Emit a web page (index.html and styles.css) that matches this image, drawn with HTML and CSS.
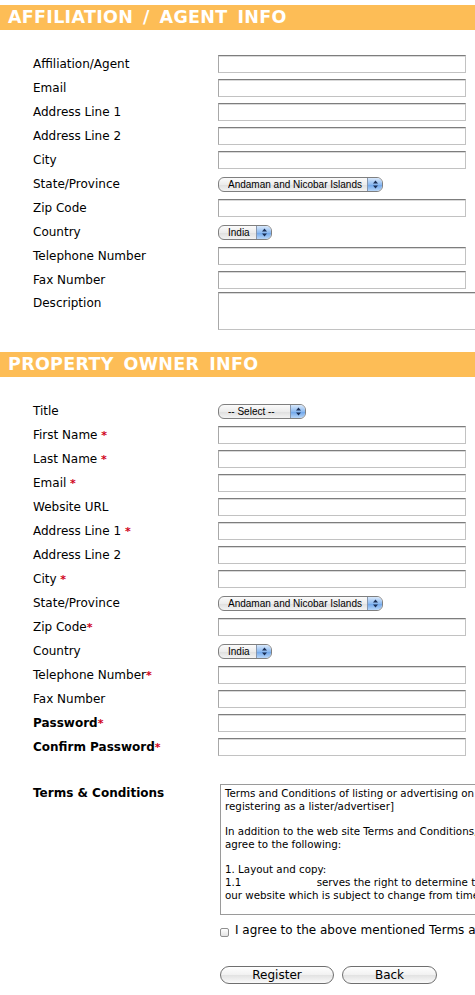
FILE: index.html
```html
<!DOCTYPE html>
<html>
<head>
<meta charset="utf-8">
<link rel="stylesheet" href="styles.css">
</head>
<body>
<div class="page">
  <h2 class="band">AFFILIATION / AGENT INFO</h2>
  <div class="form-grid section-one">
    <label class="lbl">Affiliation/Agent</label><div class="fld"><input class="txt" type="text"></div>
    <label class="lbl">Email</label><div class="fld"><input class="txt" type="text"></div>
    <label class="lbl">Address Line 1</label><div class="fld"><input class="txt" type="text"></div>
    <label class="lbl">Address Line 2</label><div class="fld"><input class="txt" type="text"></div>
    <label class="lbl">City</label><div class="fld"><input class="txt" type="text"></div>
    <label class="lbl">State/Province</label><div class="fld"><span class="select"><select class="select-native w-state"><option>Andaman and Nicobar Islands</option></select><span class="select-arrow"><svg width="7" height="9" viewBox="0 0 7 9"><path d="M3.5 0.5 L6 3.5 L1 3.5 Z M3.5 8.5 L6 5.5 L1 5.5 Z" fill="#1a2f55"/></svg></span></span></div>
    <label class="lbl">Zip Code</label><div class="fld"><input class="txt" type="text"></div>
    <label class="lbl">Country</label><div class="fld"><span class="select"><select class="select-native w-country"><option>India</option></select><span class="select-arrow"><svg width="7" height="9" viewBox="0 0 7 9"><path d="M3.5 0.5 L6 3.5 L1 3.5 Z M3.5 8.5 L6 5.5 L1 5.5 Z" fill="#1a2f55"/></svg></span></span></div>
    <label class="lbl">Telephone Number</label><div class="fld"><input class="txt" type="text"></div>
    <label class="lbl">Fax Number</label><div class="fld"><input class="txt" type="text"></div>
    <label class="lbl lbl-top">Description</label><div class="fld fld-top"><textarea class="desc"></textarea></div>
  </div>

  <h2 class="band">PROPERTY OWNER INFO</h2>
  <div class="form-grid section-two">
    <label class="lbl">Title</label><div class="fld"><span class="select"><select class="select-native w-title"><option>-- Select --</option></select><span class="select-arrow"><svg width="7" height="9" viewBox="0 0 7 9"><path d="M3.5 0.5 L6 3.5 L1 3.5 Z M3.5 8.5 L6 5.5 L1 5.5 Z" fill="#1a2f55"/></svg></span></span></div>
    <label class="lbl">First Name <span class="req">*</span></label><div class="fld"><input class="txt" type="text"></div>
    <label class="lbl">Last Name <span class="req">*</span></label><div class="fld"><input class="txt" type="text"></div>
    <label class="lbl">Email <span class="req">*</span></label><div class="fld"><input class="txt" type="text"></div>
    <label class="lbl">Website URL</label><div class="fld"><input class="txt" type="text"></div>
    <label class="lbl">Address Line 1 <span class="req">*</span></label><div class="fld"><input class="txt" type="text"></div>
    <label class="lbl">Address Line 2</label><div class="fld"><input class="txt" type="text"></div>
    <label class="lbl">City <span class="req">*</span></label><div class="fld"><input class="txt" type="text"></div>
    <label class="lbl">State/Province</label><div class="fld"><span class="select"><select class="select-native w-state"><option>Andaman and Nicobar Islands</option></select><span class="select-arrow"><svg width="7" height="9" viewBox="0 0 7 9"><path d="M3.5 0.5 L6 3.5 L1 3.5 Z M3.5 8.5 L6 5.5 L1 5.5 Z" fill="#1a2f55"/></svg></span></span></div>
    <label class="lbl">Zip Code<span class="req">*</span></label><div class="fld"><input class="txt" type="text"></div>
    <label class="lbl">Country</label><div class="fld"><span class="select"><select class="select-native w-country"><option>India</option></select><span class="select-arrow"><svg width="7" height="9" viewBox="0 0 7 9"><path d="M3.5 0.5 L6 3.5 L1 3.5 Z M3.5 8.5 L6 5.5 L1 5.5 Z" fill="#1a2f55"/></svg></span></span></div>
    <label class="lbl">Telephone Number<span class="req">*</span></label><div class="fld"><input class="txt" type="text"></div>
    <label class="lbl">Fax Number</label><div class="fld"><input class="txt" type="text"></div>
    <label class="lbl lbl-bold">Password<span class="req">*</span></label><div class="fld"><input class="txt" type="password"></div>
    <label class="lbl lbl-bold">Confirm Password<span class="req">*</span></label><div class="fld"><input class="txt" type="password"></div>
  </div>

  <div class="terms">
    <div class="terms-label">Terms &amp; Conditions</div>
    <div class="terms-body">
      <textarea class="terms-text" readonly>Terms and Conditions of listing or advertising on this website [applicable upon
registering as a lister/advertiser]

In addition to the web site Terms and Conditions, all listers/advertisers
agree to the following:

1. Layout and copy:
1.1                       serves the right to determine the layout of listings on
our website which is subject to change from time to time.</textarea>
      <div class="agree"><input class="chk" type="checkbox"><span class="agree-text">I agree to the above mentioned Terms and Conditions</span></div>
      <div class="actions">
        <button class="btn btn-register" type="button">Register</button>
        <button class="btn btn-back" type="button">Back</button>
      </div>
    </div>
  </div>
</div>
</body>
</html>
```

FILE: styles.css
```css
html, body {
  margin: 0;
  padding: 0;
  overflow: hidden;
  background: #ffffff;
}

.page {
  width: 475px;
  overflow: hidden;
  padding-top: 5px;
  font-family: "DejaVu Sans", Verdana, sans-serif;
  color: #000;
}

.band {
  margin: 0;
  height: 25px;
  line-height: 25px;
  background: #fdbd56;
  color: #ffffff;
  font-family: "DejaVu Sans", Verdana, sans-serif;
  font-weight: bold;
  font-size: 17.5px;
  letter-spacing: 0.3px;
  word-spacing: 3.5px;
  padding-left: 8px;
  white-space: nowrap;
}

.form-grid {
  display: grid;
  grid-template-columns: 185px 320px;
  grid-auto-rows: 24px;
  padding-left: 33px;
}

.section-one {
  grid-template-rows: repeat(10, 24px) 38px;
  padding-top: 22px;
  padding-bottom: 22px;
}

.section-two {
  padding-top: 22px;
}

.lbl {
  display: block;
  font-size: 12px;
  line-height: 24px;
  white-space: nowrap;
}

.lbl-bold {
  font-weight: bold;
}

.lbl-top {
  line-height: 22px;
}

.req {
  color: #d0021b;
  font-weight: bold;
  font-size: 11px;
}

.fld {
  display: flex;
  align-items: center;
}

.fld-top {
  align-items: flex-start;
}

.txt {
  box-sizing: border-box;
  width: 248px;
  height: 18px;
  margin: 0;
  border: 1px solid #c2c2c2;
  border-top-color: #7d7d7d;
  border-left-color: #a8a8a8;
  box-shadow: inset 0 1px 0 #d9d9d9;
  background: #ffffff;
  padding: 0 3px;
  font: 12px "DejaVu Sans", sans-serif;
}

.desc {
  box-sizing: border-box;
  width: 320px;
  height: 38px;
  margin: 0;
  border: 1px solid #c2c2c2;
  border-top-color: #7d7d7d;
  border-left-color: #a8a8a8;
  box-shadow: inset 0 1px 0 #d9d9d9;
  resize: none;
}

.select {
  display: inline-flex;
  height: 15px;
  box-sizing: border-box;
  border: 1px solid #7f7f7f;
  border-radius: 6px;
  overflow: hidden;
  background: linear-gradient(#fbfbfb, #ececec 50%, #dedede 51%, #f3f3f3);
}

.select-native {
  appearance: none;
  -webkit-appearance: none;
  border: 0;
  margin: 0;
  background: transparent;
  height: 13px;
  line-height: 13px;
  padding: 0 0 0 9px;
  font: 10px "Liberation Sans", Arial, sans-serif;
  color: #000;
}

.w-state { width: 148px; }
.w-country { width: 37px; }
.w-title { width: 71px; }

.select-arrow {
  width: 14px;
  height: 13px;
  border-left: 1px solid #8796ad;
  background: linear-gradient(#d8e8fb, #8dbaf0 50%, #6aa3ea 51%, #b8d6f8);
  display: flex;
  align-items: center;
  justify-content: center;
}

.terms {
  display: grid;
  grid-template-columns: 187px 320px;
  padding-left: 33px;
  padding-top: 25px;
}

.terms-label {
  font-size: 12px;
  font-weight: bold;
  line-height: 18px;
  white-space: nowrap;
}

.terms-text {
  display: block;
  box-sizing: border-box;
  width: 320px;
  height: 131px;
  margin: 0;
  border: 1px solid #9a9a9a;
  padding: 2px 4px;
  font: 10.3px/12.7px "DejaVu Sans", sans-serif;
  white-space: pre;
  overflow: hidden;
  resize: none;
  color: #000;
}

.agree {
  display: flex;
  align-items: center;
  gap: 6px;
  height: 18px;
  margin-top: 6px;
  white-space: nowrap;
}

.chk {
  flex-shrink: 0;
  appearance: none;
  -webkit-appearance: none;
  box-sizing: border-box;
  width: 9px;
  height: 9px;
  margin: 4px 0 0 0;
  border: 1px solid #8f8f8f;
  border-radius: 2px;
  background: linear-gradient(#ffffff, #e3e3e3);
}

.agree-text {
  font-size: 12px;
}

.actions {
  display: flex;
  gap: 8px;
  margin-top: 27px;
}

.btn {
  box-sizing: border-box;
  height: 18px;
  border: 1px solid #6f6f6f;
  border-radius: 9px;
  background: linear-gradient(#ffffff, #f1f1f1 50%, #e2e2e2 51%, #fafafa);
  font: 12px "DejaVu Sans", sans-serif;
  color: #000;
  padding: 0;
  margin: 0;
}

.btn-register { width: 114px; }
.btn-back { width: 95px; }
```
